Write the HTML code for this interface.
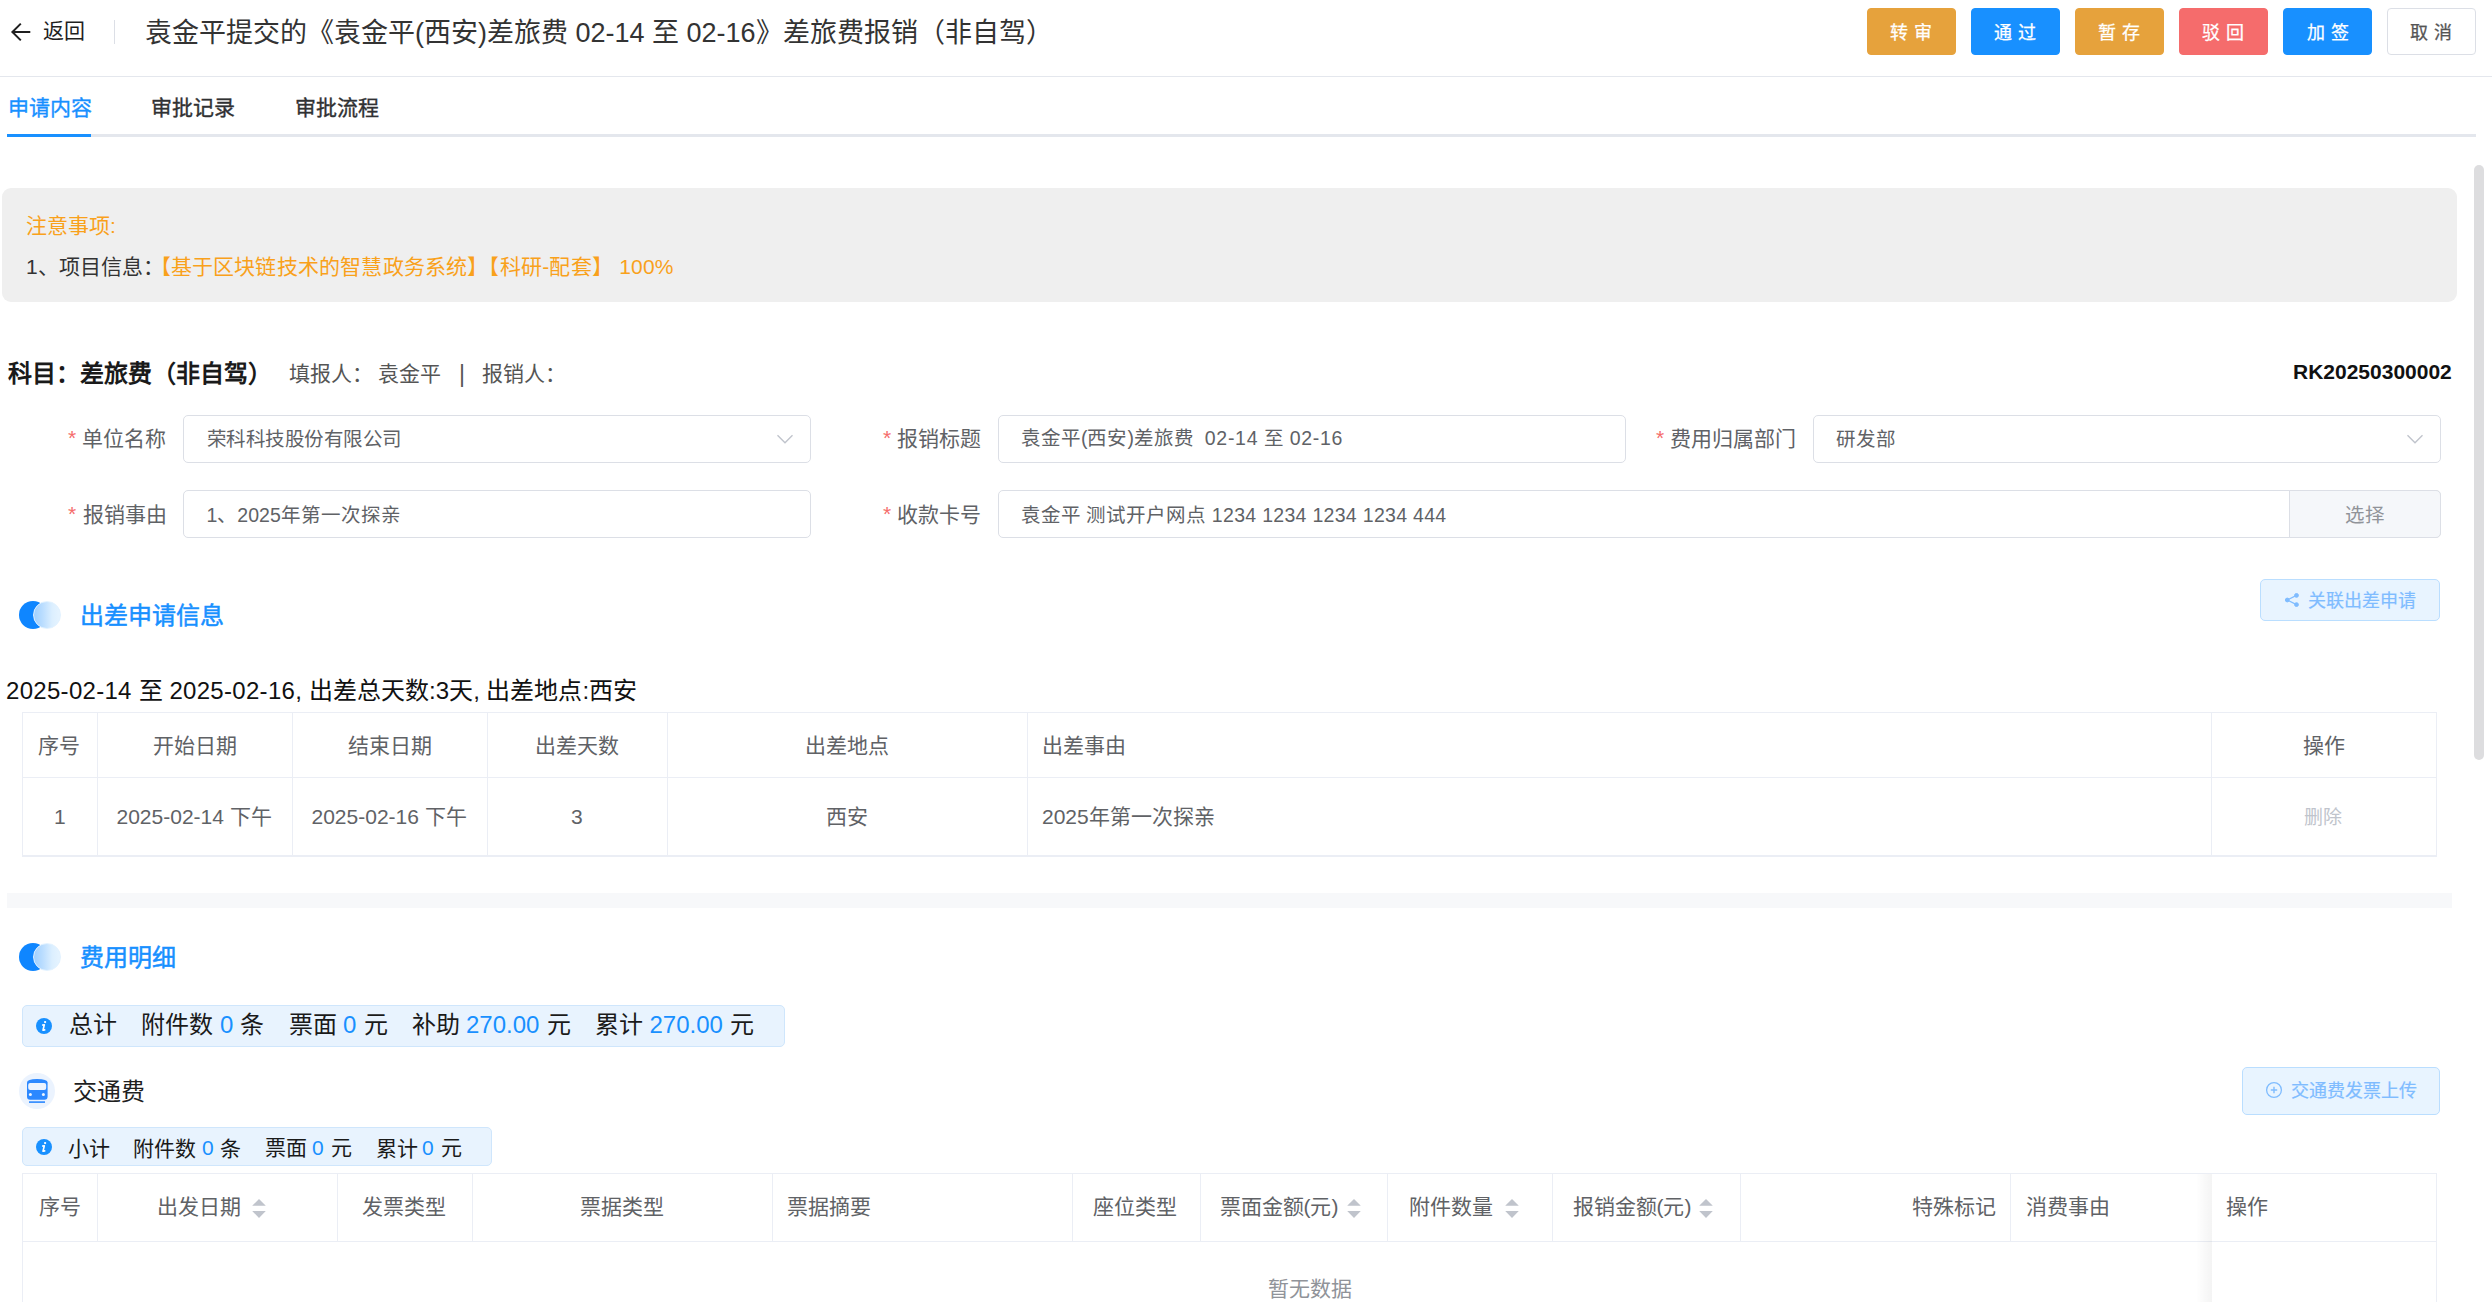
<!DOCTYPE html>
<html lang="zh-CN"><head><meta charset="utf-8"><title>差旅费报销</title>
<style>
html,body{margin:0;padding:0;background:#fff;width:2492px;height:1302px;overflow:hidden}
body{position:relative;font-family:"Liberation Sans",sans-serif}
.t{position:absolute;white-space:nowrap}
</style></head><body>
<svg style="position:absolute;left:0;top:0" width="40" height="60"><path d="M12.5 32 H30.3 M20.8 23.6 L12.4 32 L20.8 40.4" fill="none" stroke="#1f1f1f" stroke-width="2" stroke-linecap="butt" stroke-linejoin="miter"/></svg>
<div style="position:absolute;left:114px;top:20px;width:1px;height:24px;background:#dcdfe6"></div>
<div style="position:absolute;left:1867px;top:8px;width:89px;height:47px;box-sizing:border-box;background:#e6a23c;border:1px solid #e6a23c;border-radius:4px"></div>
<div style="position:absolute;left:1971px;top:8px;width:89px;height:47px;box-sizing:border-box;background:#1890ff;border:1px solid #1890ff;border-radius:4px"></div>
<div style="position:absolute;left:2075px;top:8px;width:89px;height:47px;box-sizing:border-box;background:#e6a23c;border:1px solid #e6a23c;border-radius:4px"></div>
<div style="position:absolute;left:2179px;top:8px;width:89px;height:47px;box-sizing:border-box;background:#f56c6c;border:1px solid #f56c6c;border-radius:4px"></div>
<div style="position:absolute;left:2283px;top:8px;width:89px;height:47px;box-sizing:border-box;background:#1890ff;border:1px solid #1890ff;border-radius:4px"></div>
<div style="position:absolute;left:2387px;top:8px;width:89px;height:47px;box-sizing:border-box;background:#ffffff;border:1px solid #dcdfe6;border-radius:4px"></div>
<div style="position:absolute;left:0px;top:76px;width:2492px;height:1px;background:#e4e7ed"></div>
<div style="position:absolute;left:7px;top:134px;width:2469px;height:3px;background:#e4e7ed"></div>
<div style="position:absolute;left:7px;top:134px;width:84px;height:3px;background:#1890ff"></div>
<div style="position:absolute;left:2px;top:188px;width:2455px;height:114px;background:#efefef;border-radius:9px"></div>
<div style="position:absolute;left:183px;top:415px;width:628px;height:48px;box-sizing:border-box;border:1px solid #dcdfe6;border-radius:5px;background:#fff;"></div>
<div style="position:absolute;left:998px;top:415px;width:628px;height:48px;box-sizing:border-box;border:1px solid #dcdfe6;border-radius:5px;background:#fff;"></div>
<div style="position:absolute;left:1813px;top:415px;width:628px;height:48px;box-sizing:border-box;border:1px solid #dcdfe6;border-radius:5px;background:#fff;"></div>
<div style="position:absolute;left:183px;top:490px;width:628px;height:48px;box-sizing:border-box;border:1px solid #dcdfe6;border-radius:5px;background:#fff;"></div>
<div style="position:absolute;left:998px;top:490px;width:1443px;height:48px;box-sizing:border-box;border:1px solid #dcdfe6;border-radius:5px;background:#fff;"></div>
<div style="position:absolute;left:2289px;top:490px;width:152px;height:48px;box-sizing:border-box;background:#f5f7fa;border:1px solid #dcdfe6;border-radius:0 5px 5px 0"></div>
<svg style="position:absolute;left:775.6px;top:431px" width="18" height="18"><path d="M1.5 4.3 L9 11.8 L16.5 4.3" fill="none" stroke="#c0c4cc" stroke-width="1.4"/></svg>
<svg style="position:absolute;left:2405.6px;top:431px" width="18" height="18"><path d="M1.5 4.3 L9 11.8 L16.5 4.3" fill="none" stroke="#c0c4cc" stroke-width="1.4"/></svg>
<div style="position:absolute;left:19px;top:601px;width:28px;height:28px;border-radius:50%;background:#0f86ff"></div>
<div style="position:absolute;left:33px;top:601px;width:28px;height:28px;box-sizing:border-box;border-radius:50%;background:linear-gradient(90deg,#a0d0ff 0%,#bcdeff 35%,#dcefff 70%,#e6f4ff 100%);border:1px solid #e2f2ff"></div>
<div style="position:absolute;left:19px;top:943px;width:28px;height:28px;border-radius:50%;background:#0f86ff"></div>
<div style="position:absolute;left:33px;top:943px;width:28px;height:28px;box-sizing:border-box;border-radius:50%;background:linear-gradient(90deg,#a0d0ff 0%,#bcdeff 35%,#dcefff 70%,#e6f4ff 100%);border:1px solid #e2f2ff"></div>
<div style="position:absolute;left:2260px;top:579px;width:180px;height:42px;box-sizing:border-box;background:#e8f4ff;border:1px solid #badeff;border-radius:5px"></div>
<svg style="position:absolute;left:2284px;top:592px" width="16" height="16"><g fill="#7fbcff" stroke="#7fbcff"><circle cx="3.3" cy="8" r="1.9"/><circle cx="12.5" cy="3.4" r="1.9"/><circle cx="12.5" cy="12.6" r="1.9"/><path d="M3.3 8 L12.5 3.4 M3.3 8 L12.5 12.6" stroke-width="1.3"/></g></svg>
<div style="position:absolute;left:2242px;top:1067px;width:198px;height:48px;box-sizing:border-box;background:#e8f4ff;border:1px solid #badeff;border-radius:5px"></div>
<svg style="position:absolute;left:2265px;top:1081px" width="18" height="18"><circle cx="9" cy="9" r="7.4" fill="none" stroke="#7fbcff" stroke-width="1.3"/><path d="M9 5.8 V12.2 M5.8 9 H12.2" stroke="#7fbcff" stroke-width="1.4"/></svg>
<div style="position:absolute;left:22px;top:712px;width:2415px;height:145px;box-sizing:border-box;border:1px solid #ebeef5;border-bottom:2px solid #ebeef5"></div>
<div style="position:absolute;left:22px;top:777px;width:2415px;height:1px;background:#ebeef5"></div>
<div style="position:absolute;left:97px;top:712px;width:1px;height:144px;background:#ebeef5"></div>
<div style="position:absolute;left:292px;top:712px;width:1px;height:144px;background:#ebeef5"></div>
<div style="position:absolute;left:487px;top:712px;width:1px;height:144px;background:#ebeef5"></div>
<div style="position:absolute;left:667px;top:712px;width:1px;height:144px;background:#ebeef5"></div>
<div style="position:absolute;left:1027px;top:712px;width:1px;height:144px;background:#ebeef5"></div>
<div style="position:absolute;left:2211px;top:712px;width:1px;height:144px;background:#ebeef5"></div>
<div style="position:absolute;left:7px;top:893px;width:2445px;height:15px;background:#f7f8fa"></div>
<div style="position:absolute;left:22px;top:1005px;width:763px;height:42px;box-sizing:border-box;background:#e8f3fe;border:1px solid #cfe6fc;border-radius:5px"></div>
<div style="position:absolute;left:22px;top:1127px;width:470px;height:39px;box-sizing:border-box;background:#e8f3fe;border:1px solid #cfe6fc;border-radius:5px"></div>
<svg style="position:absolute;left:35.9px;top:1018.0999999999999px" width="16" height="16"><circle cx="8" cy="8" r="8" fill="#1890ff"/><path d="M6.7 7.0 L8.3 6.7 L7.0 12.2 L8.7 11.9" fill="none" stroke="#fff" stroke-width="1.6" stroke-linecap="round" stroke-linejoin="round"/><circle cx="9.1" cy="4.1" r="1.15" fill="#fff"/></svg>
<svg style="position:absolute;left:36px;top:1139px" width="16" height="16"><circle cx="8" cy="8" r="8" fill="#1890ff"/><path d="M6.7 7.0 L8.3 6.7 L7.0 12.2 L8.7 11.9" fill="none" stroke="#fff" stroke-width="1.6" stroke-linecap="round" stroke-linejoin="round"/><circle cx="9.1" cy="4.1" r="1.15" fill="#fff"/></svg>
<svg style="position:absolute;left:19px;top:1073px" width="36" height="36"><circle cx="18" cy="18" r="18" fill="#ebf3fe"/><path d="M8 9.5 Q8 6 18 6 Q28.6 6 28.6 9.5 V23.5 Q28.6 26.8 25.5 26.8 H11 Q8 26.8 8 23.5 Z" fill="#2b88ff"/><rect x="9.2" y="10" width="18" height="7" rx="2" fill="#ebf3fe"/><circle cx="11.4" cy="21.6" r="1.5" fill="#ebf3fe"/><circle cx="24.4" cy="21.6" r="1.5" fill="#ebf3fe"/><rect x="10" y="28.3" width="16" height="1.6" fill="#2b88ff"/></svg>
<div style="position:absolute;left:22px;top:1173px;width:2415px;height:140px;box-sizing:border-box;border:1px solid #ebeef5"></div>
<div style="position:absolute;left:22px;top:1241px;width:2415px;height:1px;background:#ebeef5"></div>
<div style="position:absolute;left:97px;top:1173px;width:1px;height:68px;background:#ebeef5"></div>
<div style="position:absolute;left:337px;top:1173px;width:1px;height:68px;background:#ebeef5"></div>
<div style="position:absolute;left:472px;top:1173px;width:1px;height:68px;background:#ebeef5"></div>
<div style="position:absolute;left:772px;top:1173px;width:1px;height:68px;background:#ebeef5"></div>
<div style="position:absolute;left:1072px;top:1173px;width:1px;height:68px;background:#ebeef5"></div>
<div style="position:absolute;left:1200px;top:1173px;width:1px;height:68px;background:#ebeef5"></div>
<div style="position:absolute;left:1387px;top:1173px;width:1px;height:68px;background:#ebeef5"></div>
<div style="position:absolute;left:1552px;top:1173px;width:1px;height:68px;background:#ebeef5"></div>
<div style="position:absolute;left:1740px;top:1173px;width:1px;height:68px;background:#ebeef5"></div>
<div style="position:absolute;left:2010px;top:1173px;width:1px;height:68px;background:#ebeef5"></div>
<div style="position:absolute;left:2196px;top:1174px;width:16px;height:128px;background:linear-gradient(90deg,rgba(0,0,0,0),rgba(0,0,0,0.045))"></div>
<svg style="position:absolute;left:252px;top:1198px" width="14" height="21"><path d="M7 1 L13.8 7.8 H0.2 Z M7 20 L13.8 13 H0.2 Z" fill="#c0c4cc"/></svg>
<svg style="position:absolute;left:1347px;top:1198px" width="14" height="21"><path d="M7 1 L13.8 7.8 H0.2 Z M7 20 L13.8 13 H0.2 Z" fill="#c0c4cc"/></svg>
<svg style="position:absolute;left:1505px;top:1198px" width="14" height="21"><path d="M7 1 L13.8 7.8 H0.2 Z M7 20 L13.8 13 H0.2 Z" fill="#c0c4cc"/></svg>
<svg style="position:absolute;left:1699px;top:1198px" width="14" height="21"><path d="M7 1 L13.8 7.8 H0.2 Z M7 20 L13.8 13 H0.2 Z" fill="#c0c4cc"/></svg>
<div style="position:absolute;left:2474px;top:165px;width:10px;height:595px;background:#dddddf;border-radius:5px"></div>
<div class="t" id="back" style="left:43.0px;top:16.0px;font-size:21px;line-height:29px;color:#1f1f1f;font-weight:400;">返回</div>
<div class="t" id="title" style="left:145.0px;top:13.5px;font-size:27px;line-height:38px;color:#333333;font-weight:400;">袁金平提交的《袁金平(西安)差旅费 02-14 至 02-16》差旅费报销（非自驾）</div>
<div class="t" id="btn0" style="left:1890.0px;top:20.5px;font-size:18px;line-height:25px;color:#fff;font-weight:400;letter-spacing:6px;-webkit-text-stroke:0.25px currentColor;">转审</div>
<div class="t" id="btn1" style="left:1994.0px;top:20.5px;font-size:18px;line-height:25px;color:#fff;font-weight:400;letter-spacing:6px;-webkit-text-stroke:0.25px currentColor;">通过</div>
<div class="t" id="btn2" style="left:2097.5px;top:20.5px;font-size:18px;line-height:25px;color:#fff;font-weight:400;letter-spacing:6px;-webkit-text-stroke:0.25px currentColor;">暂存</div>
<div class="t" id="btn3" style="left:2202.0px;top:20.5px;font-size:18px;line-height:25px;color:#fff;font-weight:400;letter-spacing:6px;-webkit-text-stroke:0.25px currentColor;">驳回</div>
<div class="t" id="btn4" style="left:2306.5px;top:20.5px;font-size:18px;line-height:25px;color:#fff;font-weight:400;letter-spacing:6px;-webkit-text-stroke:0.25px currentColor;">加签</div>
<div class="t" id="btn5" style="left:2410.0px;top:20.5px;font-size:18px;line-height:25px;color:#555;font-weight:400;letter-spacing:6px;-webkit-text-stroke:0.25px currentColor;">取消</div>
<div class="t" id="tab1" style="left:7.5px;top:92.5px;font-size:21px;line-height:29px;color:#1890ff;font-weight:400;-webkit-text-stroke:0.35px currentColor;">申请内容</div>
<div class="t" id="tab2" style="left:151.0px;top:92.5px;font-size:21px;line-height:29px;color:#303133;font-weight:400;-webkit-text-stroke:0.35px currentColor;">审批记录</div>
<div class="t" id="tab3" style="left:295.0px;top:92.5px;font-size:21px;line-height:29px;color:#303133;font-weight:400;-webkit-text-stroke:0.35px currentColor;">审批流程</div>
<div class="t" id="n1" style="left:26.0px;top:210.5px;font-size:21px;line-height:29px;color:#f9a11b;font-weight:400;">注意事项:</div>
<div class="t" id="n2a" style="left:26.0px;top:252.0px;font-size:21px;line-height:29px;color:#333333;font-weight:400;">1、项目信息：</div>
<div class="t" id="n2b" style="left:149.5px;top:252.0px;font-size:21px;line-height:29px;color:#f9a11b;font-weight:400;letter-spacing:0.2px;">【基于区块链技术的智慧政务系统】【科研-配套】 100%</div>
<div class="t" id="subj" style="left:8.0px;top:356.5px;font-size:24px;line-height:34px;color:#1a1a1a;font-weight:700;">科目：差旅费（非自驾）</div>
<div class="t" id="fill1" style="left:289.0px;top:359.0px;font-size:21px;line-height:29px;color:#555555;font-weight:400;">填报人：</div>
<div class="t" id="fill2" style="left:378.0px;top:359.0px;font-size:21px;line-height:29px;color:#555555;font-weight:400;">袁金平</div>
<div class="t" id="fill3" style="left:459.0px;top:357.5px;font-size:23px;line-height:32px;color:#555555;font-weight:400;">|</div>
<div class="t" id="fill4" style="left:482.0px;top:359.0px;font-size:21px;line-height:29px;color:#555555;font-weight:400;">报销人：</div>
<div class="t" id="rk" style="left:2293.0px;top:357.0px;font-size:21px;line-height:29px;color:#111111;font-weight:700;">RK20250300002</div>
<div class="t" id="lab20" style="left:81.5px;top:424.0px;font-size:21px;line-height:29px;color:#606266;font-weight:400;">单位名称</div>
<div class="t" id="ast20" style="left:68.0px;top:422.5px;font-size:21px;line-height:29px;color:#f56c6c;font-weight:400;">*</div>
<div class="t" id="lab22" style="left:82.5px;top:500.0px;font-size:21px;line-height:29px;color:#606266;font-weight:400;">报销事由</div>
<div class="t" id="ast22" style="left:68.0px;top:498.5px;font-size:21px;line-height:29px;color:#f56c6c;font-weight:400;">*</div>
<div class="t" id="lab24" style="left:896.5px;top:424.0px;font-size:21px;line-height:29px;color:#606266;font-weight:400;">报销标题</div>
<div class="t" id="ast24" style="left:883.0px;top:422.5px;font-size:21px;line-height:29px;color:#f56c6c;font-weight:400;">*</div>
<div class="t" id="lab26" style="left:896.5px;top:500.0px;font-size:21px;line-height:29px;color:#606266;font-weight:400;">收款卡号</div>
<div class="t" id="ast26" style="left:883.0px;top:498.5px;font-size:21px;line-height:29px;color:#f56c6c;font-weight:400;">*</div>
<div class="t" id="lab28" style="left:1670.0px;top:424.0px;font-size:21px;line-height:29px;color:#606266;font-weight:400;">费用归属部门</div>
<div class="t" id="ast28" style="left:1656.0px;top:422.5px;font-size:21px;line-height:29px;color:#f56c6c;font-weight:400;">*</div>
<div class="t" id="inp30" style="left:206.5px;top:426.0px;font-size:19.5px;line-height:27px;color:#606266;font-weight:400;"><span style="letter-spacing:-0.45px">荣科科技股份有限公司</span></div>
<div class="t" id="inp31" style="left:206.5px;top:502.0px;font-size:19.5px;line-height:27px;color:#606266;font-weight:400;">1、2025年第一次探亲</div>
<div class="t" id="inp32" style="left:1021.0px;top:425.0px;font-size:19.5px;line-height:27px;color:#606266;font-weight:400;">袁金平(西安)差旅费&nbsp; <span style="letter-spacing:0.7px">02-14 </span>至 <span style="letter-spacing:0.7px">02-16</span></div>
<div class="t" id="inp33" style="left:1021.0px;top:502.0px;font-size:19.5px;line-height:27px;color:#606266;font-weight:400;">袁金平 测试开户网点 <span style="letter-spacing:0.3px">1234 1234 1234 1234 444</span></div>
<div class="t" id="inp34" style="left:1836.0px;top:426.0px;font-size:19.5px;line-height:27px;color:#606266;font-weight:400;">研发部</div>
<div class="t" id="sel" style="left:2344.5px;top:501.5px;font-size:19.5px;line-height:27px;color:#909399;font-weight:400;">选择</div>
<div class="t" id="sec1" style="left:79.5px;top:598.5px;font-size:24px;line-height:34px;color:#1890ff;font-weight:400;-webkit-text-stroke:0.5px currentColor;">出差申请信息</div>
<div class="t" id="link1" style="left:2308.0px;top:589.0px;font-size:18px;line-height:25px;color:#7fbcff;font-weight:400;-webkit-text-stroke:0.2px currentColor;">关联出差申请</div>
<div class="t" id="trip" style="left:6.0px;top:673.5px;font-size:24px;line-height:34px;color:#111111;font-weight:400;"><span style="letter-spacing:0.3px">2025-02-14 </span>至 <span style="letter-spacing:0.3px">2025-02-16, </span>出差总天数:3天, 出差地点:西安</div>
<div class="t" id="th1_39" style="left:38.0px;top:731.0px;font-size:21px;line-height:29px;color:#606266;font-weight:400;">序号</div>
<div class="t" id="th1_40" style="left:153.0px;top:731.0px;font-size:21px;line-height:29px;color:#606266;font-weight:400;">开始日期</div>
<div class="t" id="th1_41" style="left:348.0px;top:731.0px;font-size:21px;line-height:29px;color:#606266;font-weight:400;">结束日期</div>
<div class="t" id="th1_42" style="left:534.5px;top:731.0px;font-size:21px;line-height:29px;color:#606266;font-weight:400;">出差天数</div>
<div class="t" id="th1_43" style="left:805.0px;top:731.0px;font-size:21px;line-height:29px;color:#606266;font-weight:400;">出差地点</div>
<div class="t" id="th1_44" style="left:2303.0px;top:731.0px;font-size:21px;line-height:29px;color:#606266;font-weight:400;">操作</div>
<div class="t" id="th1_reason" style="left:1041.5px;top:731.0px;font-size:21px;line-height:29px;color:#606266;font-weight:400;">出差事由</div>
<div class="t" id="td1_46" style="left:54.0px;top:801.5px;font-size:21px;line-height:29px;color:#606266;font-weight:400;">1</div>
<div class="t" id="td1_47" style="left:116.5px;top:802.0px;font-size:21px;line-height:29px;color:#606266;font-weight:400;">2025-02-14 下午</div>
<div class="t" id="td1_48" style="left:311.5px;top:802.0px;font-size:21px;line-height:29px;color:#606266;font-weight:400;">2025-02-16 下午</div>
<div class="t" id="td1_49" style="left:571.0px;top:801.5px;font-size:21px;line-height:29px;color:#606266;font-weight:400;">3</div>
<div class="t" id="td1_50" style="left:826.0px;top:802.0px;font-size:21px;line-height:29px;color:#606266;font-weight:400;">西安</div>
<div class="t" id="td1_51" style="left:2304.0px;top:804.0px;font-size:19px;line-height:27px;color:#c0c4cc;font-weight:400;">删除</div>
<div class="t" id="td1_reason" style="left:1042.0px;top:802.0px;font-size:21px;line-height:29px;color:#606266;font-weight:400;">2025年第一次探亲</div>
<div class="t" id="sec2" style="left:79.5px;top:940.5px;font-size:24px;line-height:34px;color:#1890ff;font-weight:400;-webkit-text-stroke:0.5px currentColor;">费用明细</div>
<div class="t" id="sum54" style="left:69.0px;top:1008.0px;font-size:24px;line-height:34px;color:#1a1a1a;font-weight:400;">总计</div>
<div class="t" id="sum55" style="left:140.5px;top:1008.0px;font-size:24px;line-height:34px;color:#1a1a1a;font-weight:400;">附件数</div>
<div class="t" id="sum56" style="left:220.0px;top:1007.5px;font-size:24px;line-height:34px;color:#1890ff;font-weight:400;">0</div>
<div class="t" id="sum57" style="left:239.5px;top:1007.5px;font-size:24px;line-height:34px;color:#1a1a1a;font-weight:400;">条</div>
<div class="t" id="sum58" style="left:289.0px;top:1007.5px;font-size:24px;line-height:34px;color:#1a1a1a;font-weight:400;">票面</div>
<div class="t" id="sum59" style="left:343.0px;top:1007.5px;font-size:24px;line-height:34px;color:#1890ff;font-weight:400;">0</div>
<div class="t" id="sum60" style="left:364.0px;top:1007.5px;font-size:24px;line-height:34px;color:#1a1a1a;font-weight:400;">元</div>
<div class="t" id="sum61" style="left:412.0px;top:1008.0px;font-size:24px;line-height:34px;color:#1a1a1a;font-weight:400;">补助</div>
<div class="t" id="sum62" style="left:466.0px;top:1007.5px;font-size:24px;line-height:34px;color:#1890ff;font-weight:400;">270.00</div>
<div class="t" id="sum63" style="left:547.0px;top:1007.5px;font-size:24px;line-height:34px;color:#1a1a1a;font-weight:400;">元</div>
<div class="t" id="sum64" style="left:595.0px;top:1008.0px;font-size:24px;line-height:34px;color:#1a1a1a;font-weight:400;">累计</div>
<div class="t" id="sum65" style="left:649.5px;top:1007.5px;font-size:24px;line-height:34px;color:#1890ff;font-weight:400;">270.00</div>
<div class="t" id="sum66" style="left:730.0px;top:1007.5px;font-size:24px;line-height:34px;color:#1a1a1a;font-weight:400;">元</div>
<div class="t" id="traffic" style="left:72.5px;top:1074.5px;font-size:24px;line-height:34px;color:#1f1f1f;font-weight:400;">交通费</div>
<div class="t" id="upload" style="left:2291.0px;top:1079.0px;font-size:18px;line-height:25px;color:#7fbcff;font-weight:400;-webkit-text-stroke:0.2px currentColor;">交通费发票上传</div>
<div class="t" id="sub69" style="left:68.0px;top:1133.5px;font-size:21px;line-height:29px;color:#1a1a1a;font-weight:400;">小计</div>
<div class="t" id="sub70" style="left:132.5px;top:1133.5px;font-size:21px;line-height:29px;color:#1a1a1a;font-weight:400;">附件数</div>
<div class="t" id="sub71" style="left:202.0px;top:1133.0px;font-size:21px;line-height:29px;color:#1890ff;font-weight:400;">0</div>
<div class="t" id="sub72" style="left:220.0px;top:1133.5px;font-size:21px;line-height:29px;color:#1a1a1a;font-weight:400;">条</div>
<div class="t" id="sub73" style="left:264.5px;top:1133.0px;font-size:21px;line-height:29px;color:#1a1a1a;font-weight:400;">票面</div>
<div class="t" id="sub74" style="left:312.0px;top:1133.0px;font-size:21px;line-height:29px;color:#1890ff;font-weight:400;">0</div>
<div class="t" id="sub75" style="left:330.5px;top:1133.0px;font-size:21px;line-height:29px;color:#1a1a1a;font-weight:400;">元</div>
<div class="t" id="sub76" style="left:375.5px;top:1133.5px;font-size:21px;line-height:29px;color:#1a1a1a;font-weight:400;">累计</div>
<div class="t" id="sub77" style="left:422.0px;top:1133.0px;font-size:21px;line-height:29px;color:#1890ff;font-weight:400;">0</div>
<div class="t" id="sub78" style="left:441.0px;top:1133.0px;font-size:21px;line-height:29px;color:#1a1a1a;font-weight:400;">元</div>
<div class="t" id="th2_79" style="left:38.5px;top:1192.0px;font-size:21px;line-height:29px;color:#606266;font-weight:400;">序号</div>
<div class="t" id="th2_80" style="left:157.0px;top:1192.0px;font-size:21px;line-height:29px;color:#606266;font-weight:400;">出发日期</div>
<div class="t" id="th2_81" style="left:362.0px;top:1192.0px;font-size:21px;line-height:29px;color:#606266;font-weight:400;">发票类型</div>
<div class="t" id="th2_82" style="left:580.0px;top:1192.0px;font-size:21px;line-height:29px;color:#606266;font-weight:400;">票据类型</div>
<div class="t" id="th2_83" style="left:787.0px;top:1192.0px;font-size:21px;line-height:29px;color:#606266;font-weight:400;">票据摘要</div>
<div class="t" id="th2_84" style="left:1093.0px;top:1192.0px;font-size:21px;line-height:29px;color:#606266;font-weight:400;">座位类型</div>
<div class="t" id="th2_85" style="left:1219.5px;top:1191.5px;font-size:21px;line-height:29px;color:#606266;font-weight:400;">票面金额(元)</div>
<div class="t" id="th2_86" style="left:1409.0px;top:1192.0px;font-size:21px;line-height:29px;color:#606266;font-weight:400;">附件数量</div>
<div class="t" id="th2_87" style="left:1572.5px;top:1191.5px;font-size:21px;line-height:29px;color:#606266;font-weight:400;">报销金额(元)</div>
<div class="t" id="th2_88" style="left:1911.5px;top:1192.0px;font-size:21px;line-height:29px;color:#606266;font-weight:400;">特殊标记</div>
<div class="t" id="th2_89" style="left:2025.5px;top:1192.0px;font-size:21px;line-height:29px;color:#606266;font-weight:400;">消费事由</div>
<div class="t" id="th2_90" style="left:2226.0px;top:1192.0px;font-size:21px;line-height:29px;color:#606266;font-weight:400;">操作</div>
<div class="t" id="empty" style="left:1267.5px;top:1274.0px;font-size:21px;line-height:29px;color:#909399;font-weight:400;">暂无数据</div>
</body></html>
